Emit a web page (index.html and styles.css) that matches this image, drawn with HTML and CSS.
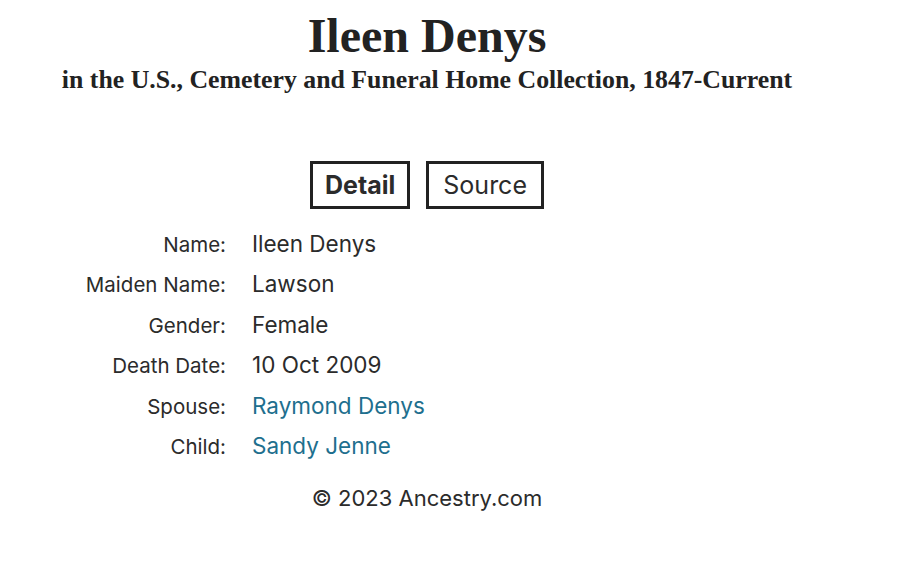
FILE: index.html
```html
<!DOCTYPE html>
<html>
<head>
<meta charset="utf-8">
<link rel="stylesheet" href="styles.css">
</head>
<body>
<div class="page">
  <header class="head">
    <h1 class="title">Ileen Denys</h1>
    <h2 class="subtitle">in the U.S., Cemetery and Funeral Home Collection, 1847-Current</h2>
  </header>
  <nav class="tabs">
    <span class="tab tab-active">Detail</span>
    <span class="tab">Source</span>
  </nav>
  <div class="facts">
    <div class="row"><span class="label">Name:</span><span class="value">Ileen Denys</span></div>
    <div class="row"><span class="label">Maiden Name:</span><span class="value">Lawson</span></div>
    <div class="row"><span class="label">Gender:</span><span class="value">Female</span></div>
    <div class="row"><span class="label">Death Date:</span><span class="value">10 Oct 2009</span></div>
    <div class="row"><span class="label">Spouse:</span><a class="value link" href="#">Raymond Denys</a></div>
    <div class="row"><span class="label">Child:</span><a class="value link" href="#">Sandy Jenne</a></div>
  </div>
  <footer class="copy">© 2023 Ancestry.com</footer>
</div>
</body>
</html>
```
FILE: styles.css
```css
html, body { margin: 0; padding: 0; background: #fff; }
.page {
  width: 854px;
  color: #2b2b2b;
  font-family: "Inter", "Liberation Sans", sans-serif;
}
.head { text-align: center; padding-top: 9px; }
.title {
  margin: 0;
  font-family: "Liberation Serif", serif;
  font-weight: bold;
  font-size: 48px;
  line-height: 54px;
  color: #222;
}
.subtitle {
  margin: 0;
  font-family: "Liberation Serif", serif;
  font-weight: bold;
  font-size: 25.8px;
  line-height: 34px;
  color: #222;
}
.tabs {
  display: flex;
  justify-content: center;
  gap: 16px;
  margin-top: 64px;
}
.tab {
  border: 3px solid #222;
  height: 42px;
  padding: 0 14px;
  display: flex;
  align-items: center;
  font-size: 25px;
}
.tab-active { font-weight: bold; padding: 0 12px; }
.facts { margin-top: 15px; }
.row {
  display: flex;
  align-items: baseline;
  height: 40.4px;
  line-height: 40px;
}
.label {
  width: 226px;
  text-align: right;
  font-size: 20.5px;
  color: #2b2b2b;
}
.value {
  margin-left: 26px;
  font-size: 22.5px;
  color: #2b2b2b;
}
.link { color: #1e6f8e; text-decoration: none; }
.copy {
  text-align: center;
  font-size: 22px;
  margin-top: 19px;
}
```
